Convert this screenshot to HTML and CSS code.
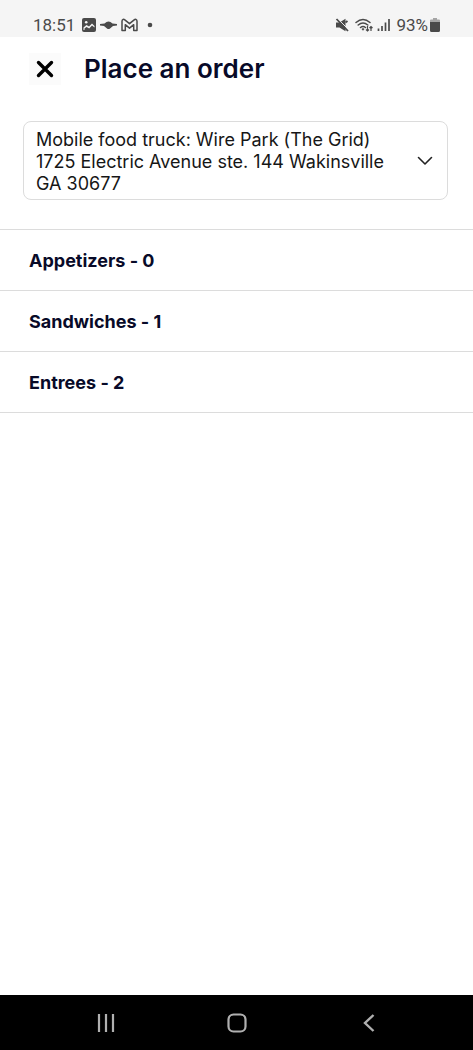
FILE: index.html
```html
<!DOCTYPE html>
<html lang="en">
<head>
<meta charset="utf-8">
<meta name="viewport" content="width=device-width, initial-scale=1">
<title>Place an order</title>
<link rel="stylesheet" href="styles.css">
</head>
<body>
<div class="statusbar">
  <div class="status-group">
    <span class="clock">18:51</span>
    <svg width="14" height="14" viewBox="0 0 14 14" aria-hidden="true"><rect width="14" height="14" rx="2" fill="#4a4a4a"/><circle cx="4.200" cy="4.300" r="1.300" fill="#f5f5f5"/><path d="M1.500 9.500 4.500 7l2.500 1.600L10 5.500 12.500 8v1.500L10 7.500 7.200 10.500 4.500 9 2.500 10.500v1.500h-1z" fill="#f5f5f5"/></svg>
    <svg width="17" height="14" viewBox="0 0 17 14" aria-hidden="true"><path d="M0 6 4.500 5.400 6.500 4q2-1 4 0l2 1.400L17 6v1.500l-4 .6L10 10.500q-1.500 1-3 0L4 8.100 0 7.500z" fill="#4a4a4a"/></svg>
    <svg width="17" height="14" viewBox="0 0 17 14" aria-hidden="true"><path d="M1 12.500V3.200C1 1.200 2.800 1 3.800 1.800L8.500 5.700l4.700-3.900C14.200 1 16 1.200 16 3.200v9.300h-3.300V6.700L8.500 10.200 4.300 6.700v5.800z" fill="none" stroke="#4a4a4a" stroke-width="1.500" stroke-linejoin="round"/></svg>
    <svg class="dot" width="6" height="14" viewBox="0 0 6 14" aria-hidden="true"><circle cx="3" cy="7" r="2.300" fill="#4a4a4a"/></svg>
  </div>
  <div class="status-group status-right">
    <svg width="14" height="14" viewBox="0 0 14 14" aria-hidden="true"><path d="M1 4.500h3.500L10.500.8v12.400L4.500 9.500H1z" fill="#4a4a4a"/><path d="M3.500 1.500 13 11" stroke="#f5f5f5"/><path d="M1.500 1 13 13M10.500 4.500 12.500 3" stroke="#4a4a4a" stroke-width="1.800" fill="none"/></svg>
    <svg class="wifi" width="18" height="14" viewBox="0 0 18 14" aria-hidden="true"><g fill="none" stroke="#4a4a4a" stroke-width="1.500" stroke-linecap="round"><path d="M1 4.500Q8 -1.500 15 4.500M3.200 7Q8 3 12.800 7M5.500 9.500Q8 7.500 10.500 9.500"/></g><path d="M6.500 11 8 10l1.500 1L8 12.800z" fill="#4a4a4a"/><path d="M12.500 8v5m-1.500-1.500 1.500 1.500 1.500-1.500M16 13V8.500m-1.500 1.500L16 8.500 17.500 10" fill="none" stroke="#4a4a4a" stroke-width="1.200"/></svg>
    <svg width="13" height="14" viewBox="0 0 13 14" aria-hidden="true"><path d="M1.500 13v-2.500M5 13V8M8.500 13V4.500M12 13V1" stroke="#4a4a4a" stroke-width="1.700"/></svg>
    <span class="battery">93%</span>
    <svg width="10" height="14" viewBox="0 0 10 14" aria-hidden="true"><path d="M3 0h4v1.500h2a1 1 0 0 1 1 1V4H0V2.500a1 1 0 0 1 1-1h2z" fill="#a5a5a5"/><path d="M0 4h10v8.500a1.500 1.500 0 0 1-1.500 1.500h-7A1.500 1.500 0 0 1 0 12.500z" fill="#4a4a4a"/></svg>
  </div>
</div>
<main class="page">
  <header class="header">
    <button class="close" type="button" aria-label="Close"><svg width="18" height="18" viewBox="0 0 18 18" aria-hidden="true"><path d="M2.500 2.500l13 13M15.500 2.500l-13 13" stroke="#000" stroke-width="3.400" stroke-linecap="round"/></svg></button>
    <h1 class="title">Place an order</h1>
  </header>
  <div class="location">
    <select class="location-select" aria-label="Pickup location">
      <option>Mobile food truck: Wire Park (The Grid) 1725 Electric Avenue ste. 144 Wakinsville GA 30677</option>
    </select>
    <svg class="chevron" width="16" height="10" viewBox="0 0 16 10" aria-hidden="true"><path d="M1.500 1.500l6.500 6.500 6.500-6.500" fill="none" stroke="#222" stroke-width="1.600" stroke-linecap="round" stroke-linejoin="round"/></svg>
  </div>
  <div class="categories">
    <button class="category" type="button">Appetizers - 0</button>
    <button class="category" type="button">Sandwiches - 1</button>
    <button class="category" type="button">Entrees - 2</button>
  </div>
</main>
<nav class="navbar" aria-label="System">
  <button class="nav-button" type="button" aria-label="Recent apps"><svg width="18" height="20" viewBox="0 0 18 20" aria-hidden="true"><path d="M2 1v18M9 1v18M16 1v18" stroke="#b0b0b0" stroke-width="2.200"/></svg></button>
  <button class="nav-button" type="button" aria-label="Home"><svg width="20" height="20" viewBox="0 0 20 20" aria-hidden="true"><rect x="1.500" y="1.500" width="17" height="17" rx="5" fill="none" stroke="#b0b0b0" stroke-width="2.200"/></svg></button>
  <button class="nav-button" type="button" aria-label="Back"><svg width="12" height="20" viewBox="0 0 12 20" aria-hidden="true"><path d="M10.500 2 2 10l8.500 8" fill="none" stroke="#b0b0b0" stroke-width="2.400"/></svg></button>
</nav>
</body>
</html>
```
FILE: styles.css
```css
* {
  box-sizing: border-box;
}

body {
  margin: 0;
  min-height: 100vh;
  display: flex;
  flex-direction: column;
  background: #fff;
  color: #080a28;
  font-family: Inter, sans-serif;
}

button,
select {
  margin: 0;
  border: 0;
  padding: 0;
  background: none;
  color: inherit;
  font: inherit;
}

.title,
.location-select,
.category {
  font-variant-ligatures: no-contextual;
}

svg {
  display: block;
  flex: none;
}

.statusbar {
  display: flex;
  justify-content: space-between;
  padding: 15px 33px 2px;
  background: #f5f5f5;
  color: #4a4a4a;
  font: 17px/20px Roboto, sans-serif;
}

.status-group {
  display: flex;
  align-items: center;
  gap: 4px;
}

.clock {
  margin-right: 3px;
}

.battery {
  margin: 0 -2px 0 2px;
}

.dot {
  margin-left: 5px;
}

.wifi {
  margin-left: 2px;
}

.page {
  flex: 1;
}

.header {
  display: flex;
  align-items: center;
  gap: 23px;
  padding: 16px 29px 14px;
}

.close {
  display: grid;
  place-items: center;
  width: 32px;
  height: 32px;
  background: #fbfbfb;
}

.title {
  margin: 0;
  font-size: 26px;
  line-height: 32px;
  font-weight: 600;
}

.location {
  display: grid;
  align-items: center;
  margin: 22px 25px 29px 23px;
}

.location-select,
.chevron {
  grid-area: 1 / 1;
}

.location-select {
  appearance: none;
  width: 100%;
  height: auto;
  padding: 7px 60px 4px 12px;
  border: 1px solid #dcdcdc;
  border-radius: 8px;
  color: #161616;
  font-size: 18px;
  line-height: 22px;
  white-space: normal;
}

.chevron {
  justify-self: end;
  margin-right: 15px;
  pointer-events: none;
}

.categories {
  display: flex;
  flex-direction: column;
  border-top: 1px solid #dcdcdc;
}

.category {
  padding: 20px 29px 18px;
  border-bottom: 1px solid #dcdcdc;
  font-size: 18px;
  line-height: 22px;
  font-weight: 700;
  text-align: left;
}

.navbar {
  display: grid;
  grid-template-columns: repeat(3, 1fr);
  padding: 0 38px 0 40px;
  background: #000;
}

.nav-button {
  display: grid;
  place-items: center;
  height: 55px;
}
```
